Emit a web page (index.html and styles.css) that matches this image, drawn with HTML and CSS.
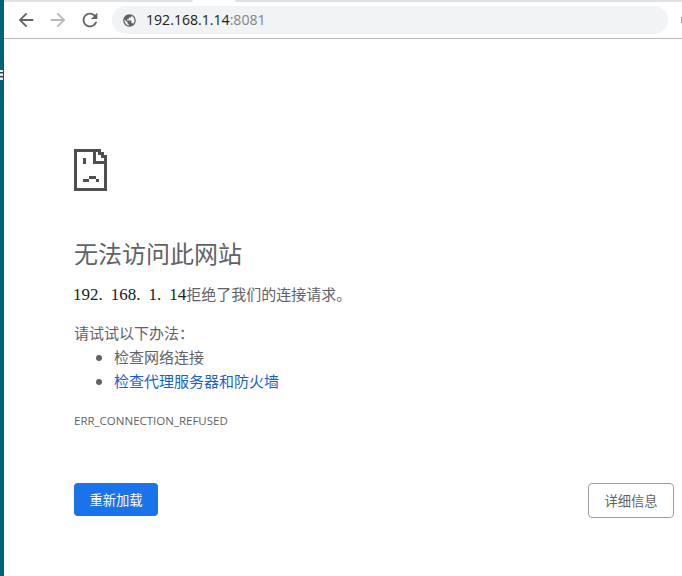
FILE: index.html
```html
<!DOCTYPE html>
<html lang="zh-CN">
<head>
<meta charset="utf-8">
<title>192.168.1.14</title>
<link rel="stylesheet" href="styles.css">
</head>
<body>
<div class="window">
  <aside class="desktop-strip"><div class="desktop-peek"></div></aside>
  <div class="browser">
    <div class="tabstrip"><div class="tab-left"></div><div class="tab-right"></div></div>
    <header class="toolbar">
      <svg class="nav-icon" viewBox="0 0 24 24"><path class="ic-dark" d="M20 11H7.83l5.59-5.59L12 4l-8 8 8 8 1.41-1.41L7.83 13H20v-2z"/></svg>
      <svg class="nav-icon" viewBox="0 0 24 24"><path class="ic-light" d="M12 4l-1.41 1.41L16.17 11H4v2h12.17l-5.58 5.59L12 20l8-8z"/></svg>
      <svg class="nav-icon" viewBox="0 0 24 24"><path class="ic-dark" d="M17.65 6.35A7.958 7.958 0 0 0 12 4c-4.42 0-7.99 3.58-7.99 8s3.57 8 7.99 8c3.73 0 6.84-2.55 7.73-6h-2.08A5.99 5.99 0 0 1 12 18c-3.31 0-6-2.69-6-6s2.69-6 6-6c1.66 0 3.14.69 4.22 1.78L13 11h7V4l-2.35 2.35z"/></svg>
      <div class="omnibox">
        <svg class="globe" viewBox="0 0 24 24"><path class="ic-dark" d="M12 2C6.48 2 2 6.48 2 12s4.48 10 10 10 10-4.48 10-10S17.52 2 12 2zm-1 17.93c-3.95-.49-7-3.85-7-7.93 0-.62.08-1.21.21-1.79L9 15v1c0 1.1.9 2 2 2v1.93zm6.9-2.54c-.26-.81-1-1.39-1.9-1.39h-1v-3c0-.55-.45-1-1-1H8v-2h2c.55 0 1-.45 1-1V7h2c1.1 0 2-.9 2-2v-.41c2.93 1.19 5 4.06 5 7.41 0 2.08-.8 3.97-2.1 5.39z"/></svg>
        <span class="url">192.168.1.14<span class="url-port">:8081</span></span>
      </div>
      <div class="toolbar-edge"></div>
    </header>
    <main class="page">
      <svg class="sad-page" viewBox="0 0 33 42" shape-rendering="crispEdges">
        <path class="sad-ink" d="M0 0h27v3h3v3h3v36H0zM3 3v36h27V15H19V3zM22 3v9h8V9h-3V6h-3V3z"/>
        <path class="sad-ink" d="M9 9h3v6H9zM15 27h7v3h-7zM9 30h6v3H9zM22 30h3v3h-3z"/>
      </svg>
      <h1 class="title">无法访问此网站</h1>
      <p class="summary"><span class="host">192<span class="dot">.</span>168<span class="dot">.</span>1<span class="dot">.</span>14</span>拒绝了我们的连接请求。</p>
      <p class="try">请试试以下办法：</p>
      <ul class="suggestions">
        <li>检查网络连接</li>
        <li><a class="link" href="#">检查代理服务器和防火墙</a></li>
      </ul>
      <div class="code">ERR_CONNECTION_REFUSED</div>
      <div class="actions">
        <button class="btn btn-primary">重新加载</button>
        <button class="btn btn-secondary">详细信息</button>
      </div>
    </main>
  </div>
</div>
</body>
</html>
```

FILE: styles.css
```css
* { box-sizing: border-box; }
html, body { margin: 0; height: 100%; overflow: hidden; background: #fff; }
body { font-family: "Noto Sans CJK SC", "Open Sans", sans-serif; color: #5f6368; }

.window { display: flex; height: 576px; }
.desktop-strip { width: 4px; flex: none; background: #04627a; border-right: 1px solid #0b5a66; padding-top: 70px; }
.desktop-peek { height: 10px; width: 3px; background: repeating-linear-gradient(#e8e8e8 0 2px, #2a3a40 2px 3px, #d99a3a 3px 4px); }

.browser { flex: 1; min-width: 0; display: flex; flex-direction: column; overflow: hidden; }

.tabstrip { height: 2px; display: flex; justify-content: space-between; flex: none; }
.tab-left { width: 189px; background: #dee1e6; border-bottom-right-radius: 2px; }
.tab-right { width: 447px; background: #dee1e6; border-bottom-left-radius: 2px; }

.toolbar { height: 37px; flex: none; display: flex; align-items: center; border-bottom: 1px solid #b9b9b9; padding-left: 11px; padding-top: 0; }
.nav-icon { width: 22px; height: 22px; flex: none; margin-right: 10px; }
.nav-icon:nth-of-type(3) { margin-right: 0; }
.ic-dark { fill: #5f6368; }
.ic-light { fill: #b6b9bd; }

.omnibox { flex: none; width: 556px; height: 28px; margin-left: 11px; border-radius: 14px; background: #f1f3f4; display: flex; align-items: center; padding-left: 10px; }
.globe { width: 15px; height: 15px; margin-right: 9px; flex: none; }
.url { font: 14.1px/28px "Open Sans", sans-serif; color: #202124; }
.url-port { color: #80868b; }
.toolbar-edge { width: 2px; height: 6px; margin-left: 13px; background: #9aa0a6; flex: none; }

.page { flex: 1; display: flex; flex-direction: column; align-items: flex-start; padding: 110px 8px 0 70px; }
.sad-page { width: 33px; height: 42px; display: block; }
.sad-ink { fill: #4f4f4f; fill-rule: evenodd; }

.title { margin: 44px 0 0; font-size: 24px; line-height: 36px; font-weight: 400; color: #5f6368; }
.summary { margin: 11px 0 0; font-size: 15px; line-height: 24px; }
.host { font: 17px/24px "Liberation Serif", serif; color: #202124; margin-left: -1px; }
.dot { letter-spacing: 8px; }
.try { margin: 14px 0 0; font-size: 15px; line-height: 24px; }
.suggestions { margin: 0; padding: 0 0 0 40px; font-size: 15px; line-height: 24px; }
.link { color: #1a5fd0; text-decoration: none; }
.code { margin-top: 18px; font: 11.5px/20px "Open Sans", sans-serif; color: #5f6368; }

.actions { align-self: stretch; display: flex; justify-content: space-between; align-items: flex-start; margin-top: 52px; }
.btn { font-family: "Noto Sans CJK SC", sans-serif; font-size: 13.3px; line-height: 18px; border-radius: 4px; padding: 0; }
.btn-primary { width: 84px; height: 33px; border: none; background: #1a73e8; color: #fff; }
.btn-secondary { width: 86px; height: 35px; border: 1px solid #9aa0a6; background: #fff; color: #5f6368; }
```
